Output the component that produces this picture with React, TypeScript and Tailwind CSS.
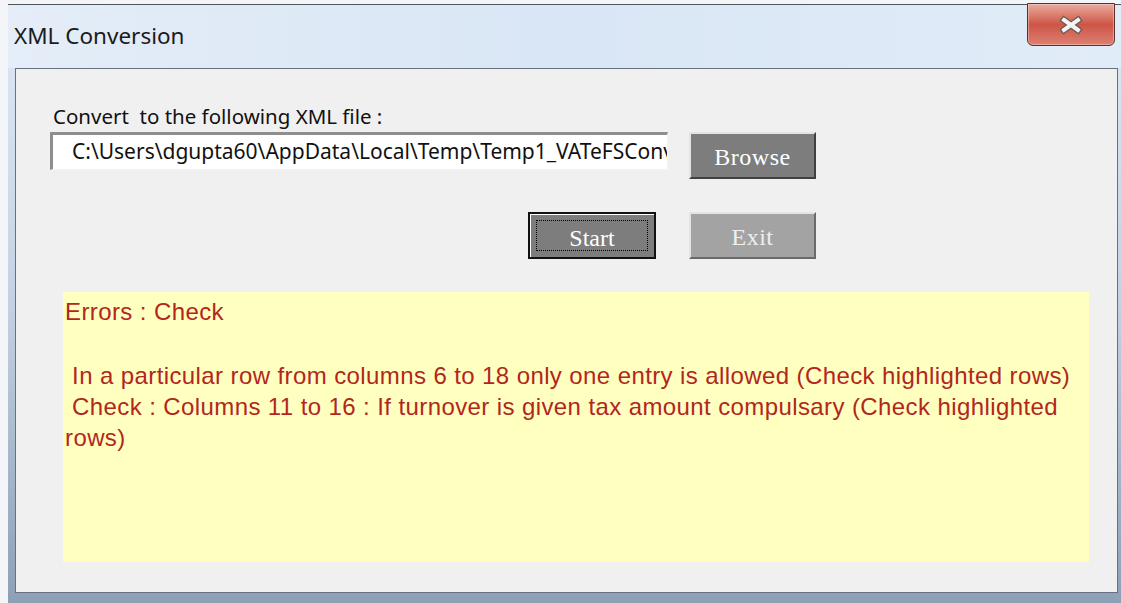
function CloseButton() {
  return (
    <div className="w-[88px] h-[43px] -mt-[2px] rounded-b-[6px] border border-[#5b3029] bg-gradient-to-b from-[#e8ab9f] via-[#cd5546] to-[#dc8072] flex items-center justify-center shadow-[inset_0_0_0_1px_rgba(255,220,210,0.45)]">
      <svg width="26" height="20" viewBox="-13 -10 26 20">
        <g strokeLinecap="square">
          <path d="M-7 -5 L7 5 M-7 5 L7 -5" stroke="#6a5853" strokeWidth="6.5" />
          <path d="M-7 -5 L7 5 M-7 5 L7 -5" stroke="#f4f4f4" strokeWidth="4" />
        </g>
      </svg>
    </div>
  );
}

function RaisedButton({ label, disabled }: { label: string; disabled?: boolean }) {
  return (
    <button
      className={
        disabled
          ? "w-[127px] h-[47px] border-2 border-t-[#e4e4e4] border-l-[#e4e4e4] border-b-[#6a6a6a] border-r-[#6a6a6a] bg-[#a3a3a3] text-[#efefef] pt-[6px]"
          : "w-[127px] h-[47px] border-2 border-t-[#e4e4e4] border-l-[#e4e4e4] border-b-[#404040] border-r-[#404040] bg-[#7d7d7d] text-white pt-[6px]"
      }
      style={{ fontFamily: '"Liberation Serif", serif' }}
    >
      <span className="text-[24px] leading-none tracking-[0.5px]">{label}</span>
    </button>
  );
}

function StartButton() {
  return (
    <button
      className="w-[128px] h-[47px] border-2 border-[#111] bg-[#7d7d7d] flex p-[1px] shadow-[inset_1px_1px_0_#fff]"
      style={{ fontFamily: '"Liberation Serif", serif' }}
    >
      <div className="flex-1 m-[5px] border border-dotted border-black flex items-center justify-center pt-[4px]">
        <span className="text-[24px] leading-none text-white">Start</span>
      </div>
    </button>
  );
}

export default function App() {
  return (
    <div
      className="w-[1121px] h-[603px] overflow-hidden bg-[#f3f5f8] pt-[4px] pl-[8px]"
      style={{ fontFamily: '"Noto Sans", sans-serif' }}
    >
      <div className="h-[599px] flex flex-col border-t border-[#4f555c] bg-gradient-to-b from-[#dfe9f6] via-[#c3d2e3] to-[#8da0b6]">
        {/* title bar */}
        <div className="h-[63px] flex justify-between bg-gradient-to-r from-[#e4edf8] via-[#d9e6f5] to-[#e1ecf8]">
          <div className="pl-[6px] pt-[17px] text-[22.5px] leading-[28px] text-[#1b1b1b]">XML Conversion</div>
          <div className="mr-[6px]">
            <CloseButton />
          </div>
        </div>

        {/* client area */}
        <div className="h-[525px] ml-[7px] mr-[3px] border border-[#66727f] bg-[#f0f0f0] flex flex-col pl-[34px] pt-[34px]">
          <div className="ml-[3px] text-[20.5px] leading-[26px] text-[#111] whitespace-pre">
            Convert  to the following XML file :
          </div>

          <div className="flex items-start gap-[21px] mt-[3px]">
            <input
              readOnly
              value="C:\Users\dgupta60\AppData\Local\Temp\Temp1_VATeFSConverter"
              className="w-[618px] h-[38px] bg-white border-t-[3px] border-l-[3px] border-[#8e8e8e] border-b border-r border-b-[#f4f4f4] border-r-[#f4f4f4] pl-[19px] pr-0 pb-[2px] text-[21px] leading-[28px] text-[#111] outline-none"
            />
            <RaisedButton label="Browse" />
          </div>

          <div className="flex gap-[33px] mt-[33px] ml-[478px]">
            <StartButton />
            <RaisedButton label="Exit" disabled />
          </div>

          <div
            className="mt-[33px] ml-[13px] w-[1026px] h-[270px] bg-[#ffffc0] pl-[2px] pt-[4px] text-[24px] leading-[31px] tracking-[0.4px] text-[#b3261e] whitespace-pre"
            style={{ fontFamily: '"Liberation Sans", Arial, sans-serif' }}
          >
            <div>Errors : Check</div>
            <div className="h-[33px]" />
            <div> In a particular row from columns 6 to 18 only one entry is allowed (Check highlighted rows)</div>
            <div> Check : Columns 11 to 16 : If turnover is given tax amount compulsary (Check highlighted</div>
            <div>rows)</div>
          </div>
        </div>
      </div>
    </div>
  );
}
